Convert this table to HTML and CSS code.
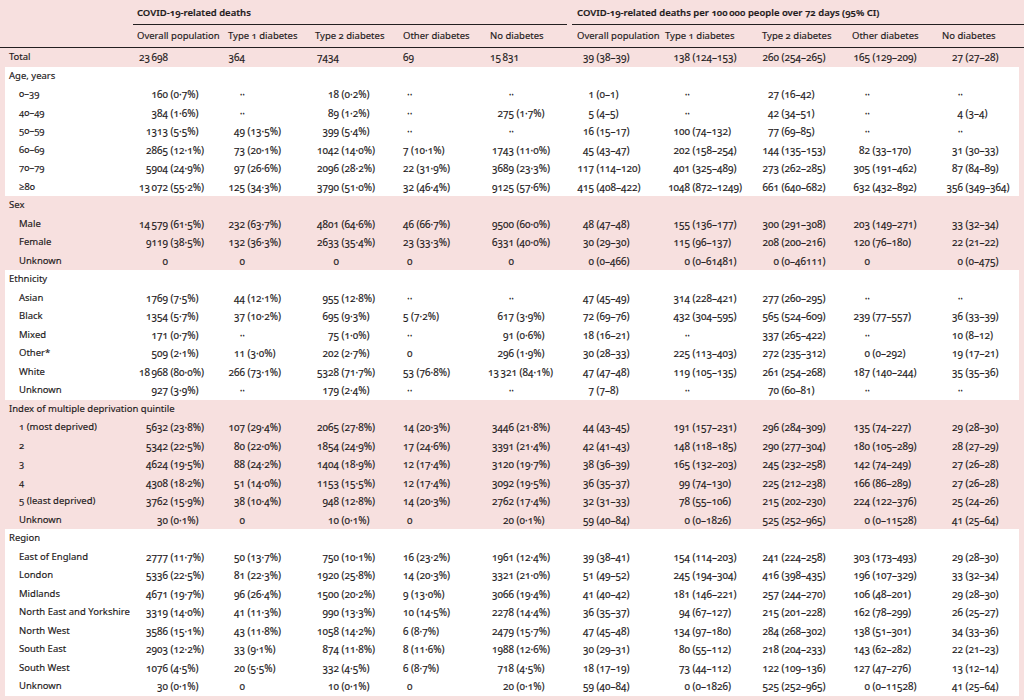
FILE: index.html
```html
<!DOCTYPE html>
<html lang="en">
<head>
<meta charset="utf-8">
<title>COVID-19-related deaths by diabetes status</title>
<link rel="stylesheet" href="styles.css">
</head>
<body>
<table class="tbl">
<colgroup>
<col class="c0"><col class="c1"><col class="c2"><col class="c3"><col class="c4"><col class="c5"><col class="c6"><col class="c7"><col class="c8"><col class="c9"><col class="c10">
</colgroup>
<thead>
<tr class="grp"><th></th><th colspan="5"><div class="gl gl1">COVID-19-related deaths</div></th><th colspan="5"><div class="gl gl2">COVID-19-related deaths per 100&#8201;000 people over 72 days (95% CI)</div></th></tr>
<tr class="sub"><th></th><th>Overall population</th><th>Type 1 diabetes</th><th>Type 2 diabetes</th><th>Other diabetes</th><th>No diabetes</th><th>Overall population</th><th>Type 1 diabetes</th><th>Type 2 diabetes</th><th>Other diabetes</th><th>No diabetes</th></tr>
</thead>
<tbody class="pink">
<tr class="tot"><th class="h">Total</th><td><span class="n">23&#8201;698</span></td><td><span class="n">364</span></td><td><span class="n">7434</span></td><td><span class="n">69</span></td><td><span class="n">15&#8201;831</span></td><td><span class="n">39</span> (38–39)</td><td><span class="n">138</span> (124–153)</td><td><span class="n">260</span> (254–265)</td><td><span class="n">165</span> (129–209)</td><td><span class="n">27</span> (27–28)</td></tr>
</tbody>
<tbody class="white">
<tr><th class="h" colspan="11">Age, years</th></tr>
<tr><th>0–39</th><td><span class="n">160</span> (0·7%)</td><td><span class="n">··</span></td><td><span class="n">18</span> (0·2%)</td><td><span class="z">··</span></td><td><span class="n">··</span></td><td><span class="n">1</span> (0–1)</td><td><span class="n">··</span></td><td><span class="n">27</span> (16–42)</td><td><span class="n">··</span></td><td><span class="n">··</span></td></tr>
<tr><th>40–49</th><td><span class="n">384</span> (1·6%)</td><td><span class="n">··</span></td><td><span class="n">89</span> (1·2%)</td><td><span class="z">··</span></td><td><span class="n">275</span> (1·7%)</td><td><span class="n">5</span> (4–5)</td><td><span class="n">··</span></td><td><span class="n">42</span> (34–51)</td><td><span class="n">··</span></td><td><span class="n">4</span> (3–4)</td></tr>
<tr><th>50–59</th><td><span class="n">1313</span> (5·5%)</td><td><span class="n">49</span> (13·5%)</td><td><span class="n">399</span> (5·4%)</td><td><span class="z">··</span></td><td><span class="n">··</span></td><td><span class="n">16</span> (15–17)</td><td><span class="n">100</span> (74–132)</td><td><span class="n">77</span> (69–85)</td><td><span class="n">··</span></td><td><span class="n">··</span></td></tr>
<tr><th>60–69</th><td><span class="n">2865</span> (12·1%)</td><td><span class="n">73</span> (20·1%)</td><td><span class="n">1042</span> (14·0%)</td><td><span class="n">7</span> (10·1%)</td><td><span class="n">1743</span> (11·0%)</td><td><span class="n">45</span> (43–47)</td><td><span class="n">202</span> (158–254)</td><td><span class="n">144</span> (135–153)</td><td><span class="n">82</span> (33–170)</td><td><span class="n">31</span> (30–33)</td></tr>
<tr><th>70–79</th><td><span class="n">5904</span> (24·9%)</td><td><span class="n">97</span> (26·6%)</td><td><span class="n">2096</span> (28·2%)</td><td><span class="n">22</span> (31·9%)</td><td><span class="n">3689</span> (23·3%)</td><td><span class="n">117</span> (114–120)</td><td><span class="n">401</span> (325–489)</td><td><span class="n">273</span> (262–285)</td><td><span class="n">305</span> (191–462)</td><td><span class="n">87</span> (84–89)</td></tr>
<tr><th>≥80</th><td><span class="n">13&#8201;072</span> (55·2%)</td><td><span class="n">125</span> (34·3%)</td><td><span class="n">3790</span> (51·0%)</td><td><span class="n">32</span> (46·4%)</td><td><span class="n">9125</span> (57·6%)</td><td><span class="n">415</span> (408–422)</td><td><span class="n">1048</span> (872–1249)</td><td><span class="n">661</span> (640–682)</td><td><span class="n">632</span> (432–892)</td><td><span class="n">356</span> (349–364)</td></tr>
</tbody>
<tbody class="pink">
<tr><th class="h" colspan="11">Sex</th></tr>
<tr><th>Male</th><td><span class="n">14&#8201;579</span> (61·5%)</td><td><span class="n">232</span> (63·7%)</td><td><span class="n">4801</span> (64·6%)</td><td><span class="n">46</span> (66·7%)</td><td><span class="n">9500</span> (60·0%)</td><td><span class="n">48</span> (47–48)</td><td><span class="n">155</span> (136–177)</td><td><span class="n">300</span> (291–308)</td><td><span class="n">203</span> (149–271)</td><td><span class="n">33</span> (32–34)</td></tr>
<tr><th>Female</th><td><span class="n">9119</span> (38·5%)</td><td><span class="n">132</span> (36·3%)</td><td><span class="n">2633</span> (35·4%)</td><td><span class="n">23</span> (33·3%)</td><td><span class="n">6331</span> (40·0%)</td><td><span class="n">30</span> (29–30)</td><td><span class="n">115</span> (96–137)</td><td><span class="n">208</span> (200–216)</td><td><span class="n">120</span> (76–180)</td><td><span class="n">22</span> (21–22)</td></tr>
<tr><th>Unknown</th><td><span class="n">0</span></td><td><span class="n">0</span></td><td><span class="n">0</span></td><td><span class="z">0</span></td><td><span class="n">0</span></td><td><span class="n">0</span> (0–466)</td><td><span class="n">0</span> (0–61481)</td><td><span class="n">0</span> (0–46111)</td><td><span class="n">0</span></td><td><span class="n">0</span> (0–475)</td></tr>
</tbody>
<tbody class="white">
<tr><th class="h" colspan="11">Ethnicity</th></tr>
<tr><th>Asian</th><td><span class="n">1769</span> (7·5%)</td><td><span class="n">44</span> (12·1%)</td><td><span class="n">955</span> (12·8%)</td><td><span class="z">··</span></td><td><span class="n">··</span></td><td><span class="n">47</span> (45–49)</td><td><span class="n">314</span> (228–421)</td><td><span class="n">277</span> (260–295)</td><td><span class="n">··</span></td><td><span class="n">··</span></td></tr>
<tr><th>Black</th><td><span class="n">1354</span> (5·7%)</td><td><span class="n">37</span> (10·2%)</td><td><span class="n">695</span> (9·3%)</td><td><span class="n">5</span> (7·2%)</td><td><span class="n">617</span> (3·9%)</td><td><span class="n">72</span> (69–76)</td><td><span class="n">432</span> (304–595)</td><td><span class="n">565</span> (524–609)</td><td><span class="n">239</span> (77–557)</td><td><span class="n">36</span> (33–39)</td></tr>
<tr><th>Mixed</th><td><span class="n">171</span> (0·7%)</td><td><span class="n">··</span></td><td><span class="n">75</span> (1·0%)</td><td><span class="z">··</span></td><td><span class="n">91</span> (0·6%)</td><td><span class="n">18</span> (16–21)</td><td><span class="n">··</span></td><td><span class="n">337</span> (265–422)</td><td><span class="n">··</span></td><td><span class="n">10</span> (8–12)</td></tr>
<tr><th>Other*</th><td><span class="n">509</span> (2·1%)</td><td><span class="n">11</span> (3·0%)</td><td><span class="n">202</span> (2·7%)</td><td><span class="z">0</span></td><td><span class="n">296</span> (1·9%)</td><td><span class="n">30</span> (28–33)</td><td><span class="n">225</span> (113–403)</td><td><span class="n">272</span> (235–312)</td><td><span class="n">0</span> (0–292)</td><td><span class="n">19</span> (17–21)</td></tr>
<tr><th>White</th><td><span class="n">18&#8201;968</span> (80·0%)</td><td><span class="n">266</span> (73·1%)</td><td><span class="n">5328</span> (71·7%)</td><td><span class="n">53</span> (76·8%)</td><td><span class="n wide">13&#8201;321</span> (84·1%)</td><td><span class="n">47</span> (47–48)</td><td><span class="n">119</span> (105–135)</td><td><span class="n">261</span> (254–268)</td><td><span class="n">187</span> (140–244)</td><td><span class="n">35</span> (35–36)</td></tr>
<tr><th>Unknown</th><td><span class="n">927</span> (3·9%)</td><td><span class="n">··</span></td><td><span class="n">179</span> (2·4%)</td><td><span class="z">··</span></td><td><span class="n">··</span></td><td><span class="n">7</span> (7–8)</td><td><span class="n">··</span></td><td><span class="n">70</span> (60–81)</td><td><span class="n">··</span></td><td><span class="n">··</span></td></tr>
</tbody>
<tbody class="pink">
<tr><th class="h" colspan="11">Index of multiple deprivation quintile</th></tr>
<tr><th>1 (most deprived)</th><td><span class="n">5632</span> (23·8%)</td><td><span class="n">107</span> (29·4%)</td><td><span class="n">2065</span> (27·8%)</td><td><span class="n">14</span> (20·3%)</td><td><span class="n">3446</span> (21·8%)</td><td><span class="n">44</span> (43–45)</td><td><span class="n">191</span> (157–231)</td><td><span class="n">296</span> (284–309)</td><td><span class="n">135</span> (74–227)</td><td><span class="n">29</span> (28–30)</td></tr>
<tr><th>2</th><td><span class="n">5342</span> (22·5%)</td><td><span class="n">80</span> (22·0%)</td><td><span class="n">1854</span> (24·9%)</td><td><span class="n">17</span> (24·6%)</td><td><span class="n">3391</span> (21·4%)</td><td><span class="n">42</span> (41–43)</td><td><span class="n">148</span> (118–185)</td><td><span class="n">290</span> (277–304)</td><td><span class="n">180</span> (105–289)</td><td><span class="n">28</span> (27–29)</td></tr>
<tr><th>3</th><td><span class="n">4624</span> (19·5%)</td><td><span class="n">88</span> (24·2%)</td><td><span class="n">1404</span> (18·9%)</td><td><span class="n">12</span> (17·4%)</td><td><span class="n">3120</span> (19·7%)</td><td><span class="n">38</span> (36–39)</td><td><span class="n">165</span> (132–203)</td><td><span class="n">245</span> (232–258)</td><td><span class="n">142</span> (74–249)</td><td><span class="n">27</span> (26–28)</td></tr>
<tr><th>4</th><td><span class="n">4308</span> (18·2%)</td><td><span class="n">51</span> (14·0%)</td><td><span class="n">1153</span> (15·5%)</td><td><span class="n">12</span> (17·4%)</td><td><span class="n">3092</span> (19·5%)</td><td><span class="n">36</span> (35–37)</td><td><span class="n">99</span> (74–130)</td><td><span class="n">225</span> (212–238)</td><td><span class="n">166</span> (86–289)</td><td><span class="n">27</span> (26–28)</td></tr>
<tr><th>5 (least deprived)</th><td><span class="n">3762</span> (15·9%)</td><td><span class="n">38</span> (10·4%)</td><td><span class="n">948</span> (12·8%)</td><td><span class="n">14</span> (20·3%)</td><td><span class="n">2762</span> (17·4%)</td><td><span class="n">32</span> (31–33)</td><td><span class="n">78</span> (55–106)</td><td><span class="n">215</span> (202–230)</td><td><span class="n">224</span> (122–376)</td><td><span class="n">25</span> (24–26)</td></tr>
<tr><th>Unknown</th><td><span class="n">30</span> (0·1%)</td><td><span class="n">0</span></td><td><span class="n">10</span> (0·1%)</td><td><span class="z">0</span></td><td><span class="n">20</span> (0·1%)</td><td><span class="n">59</span> (40–84)</td><td><span class="n">0</span> (0–1826)</td><td><span class="n">525</span> (252–965)</td><td><span class="n">0</span> (0–11528)</td><td><span class="n">41</span> (25–64)</td></tr>
</tbody>
<tbody class="white">
<tr><th class="h" colspan="11">Region</th></tr>
<tr><th>East of England</th><td><span class="n">2777</span> (11·7%)</td><td><span class="n">50</span> (13·7%)</td><td><span class="n">750</span> (10·1%)</td><td><span class="n">16</span> (23·2%)</td><td><span class="n">1961</span> (12·4%)</td><td><span class="n">39</span> (38–41)</td><td><span class="n">154</span> (114–203)</td><td><span class="n">241</span> (224–258)</td><td><span class="n">303</span> (173–493)</td><td><span class="n">29</span> (28–30)</td></tr>
<tr><th>London</th><td><span class="n">5336</span> (22·5%)</td><td><span class="n">81</span> (22·3%)</td><td><span class="n">1920</span> (25·8%)</td><td><span class="n">14</span> (20·3%)</td><td><span class="n">3321</span> (21·0%)</td><td><span class="n">51</span> (49–52)</td><td><span class="n">245</span> (194–304)</td><td><span class="n">416</span> (398–435)</td><td><span class="n">196</span> (107–329)</td><td><span class="n">33</span> (32–34)</td></tr>
<tr><th>Midlands</th><td><span class="n">4671</span> (19·7%)</td><td><span class="n">96</span> (26·4%)</td><td><span class="n">1500</span> (20·2%)</td><td><span class="n">9</span> (13·0%)</td><td><span class="n">3066</span> (19·4%)</td><td><span class="n">41</span> (40–42)</td><td><span class="n">181</span> (146–221)</td><td><span class="n">257</span> (244–270)</td><td><span class="n">106</span> (48–201)</td><td><span class="n">29</span> (28–30)</td></tr>
<tr><th>North East and Yorkshire</th><td><span class="n">3319</span> (14·0%)</td><td><span class="n">41</span> (11·3%)</td><td><span class="n">990</span> (13·3%)</td><td><span class="n">10</span> (14·5%)</td><td><span class="n">2278</span> (14·4%)</td><td><span class="n">36</span> (35–37)</td><td><span class="n">94</span> (67–127)</td><td><span class="n">215</span> (201–228)</td><td><span class="n">162</span> (78–299)</td><td><span class="n">26</span> (25–27)</td></tr>
<tr><th>North West</th><td><span class="n">3586</span> (15·1%)</td><td><span class="n">43</span> (11·8%)</td><td><span class="n">1058</span> (14·2%)</td><td><span class="n">6</span> (8·7%)</td><td><span class="n">2479</span> (15·7%)</td><td><span class="n">47</span> (45–48)</td><td><span class="n">134</span> (97–180)</td><td><span class="n">284</span> (268–302)</td><td><span class="n">138</span> (51–301)</td><td><span class="n">34</span> (33–36)</td></tr>
<tr><th>South East</th><td><span class="n">2903</span> (12·2%)</td><td><span class="n">33</span> (9·1%)</td><td><span class="n">874</span> (11·8%)</td><td><span class="n">8</span> (11·6%)</td><td><span class="n">1988</span> (12·6%)</td><td><span class="n">30</span> (29–31)</td><td><span class="n">80</span> (55–112)</td><td><span class="n">218</span> (204–233)</td><td><span class="n">143</span> (62–282)</td><td><span class="n">22</span> (21–23)</td></tr>
<tr><th>South West</th><td><span class="n">1076</span> (4·5%)</td><td><span class="n">20</span> (5·5%)</td><td><span class="n">332</span> (4·5%)</td><td><span class="n">6</span> (8·7%)</td><td><span class="n">718</span> (4·5%)</td><td><span class="n">18</span> (17–19)</td><td><span class="n">73</span> (44–112)</td><td><span class="n">122</span> (109–136)</td><td><span class="n">127</span> (47–276)</td><td><span class="n">13</span> (12–14)</td></tr>
<tr><th>Unknown</th><td><span class="n">30</span> (0·1%)</td><td><span class="n">0</span></td><td><span class="n">10</span> (0·1%)</td><td><span class="z">0</span></td><td><span class="n">20</span> (0·1%)</td><td><span class="n">59</span> (40–84)</td><td><span class="n">0</span> (0–1826)</td><td><span class="n">525</span> (252–965)</td><td><span class="n">0</span> (0–11528)</td><td><span class="n">41</span> (25–64)</td></tr>
</tbody>
</table>
</body>
</html>
```

FILE: styles.css
```css
html, body {
  margin: 0;
  padding: 0;
  background: #f7e0df;
}

body {
  font-family: "Noto Sans", "Open Sans", sans-serif;
  font-size: 9.5px;
  color: #1e1a1b;
  font-variant-numeric: oldstyle-nums;
  -webkit-text-stroke: 0.15px #1e1a1b;
}

.tbl {
  width: 1024px;
  table-layout: fixed;
  border-collapse: collapse;
  border-spacing: 0;
}

.c0 { width: 133px; }
.c1 { width: 91px; }
.c2 { width: 87px; }
.c3 { width: 88px; }
.c4 { width: 87px; }
.c5 { width: 87px; }
.c6 { width: 88px; }
.c7 { width: 97px; }
.c8 { width: 90px; }
.c9 { width: 90px; }
.c10 { width: 86px; }

th, td {
  padding: 0 0 0 4px;
  text-align: left;
  font-weight: normal;
  white-space: nowrap;
  vertical-align: middle;
  line-height: 12px;
}

tbody td {
  font-size: 10px;
}

/* header */
.grp th {
  padding: 6px 0 0 0;
  vertical-align: bottom;
}

.gl {
  padding: 0 0 5px 4px;
  line-height: 13px;
  font-weight: 600;
  border-bottom: 1px solid #231f20;
}

.gl1 { margin-right: 6px; }
.gl2 { margin-left: -1px; padding-left: 5px; }

.sub th {
  padding-top: 4px;
  padding-bottom: 5px;
  line-height: 13px;
  border-bottom: 1px solid #231f20;
}

/* body */
tbody tr { height: 18.5px; }
tbody .tot { height: 19px; }

tbody th { padding-left: 19px; }
tbody th.h { padding-left: 9px; }

.white td, .white th {
  background: #fff;
}

.white tr > :first-child {
  box-shadow: inset 5px 0 0 #f7e0df;
}

.white tr > :last-child {
  box-shadow: inset -5px 0 0 #f7e0df;
}

.white tr > th.h[colspan] {
  box-shadow: inset 5px 0 0 #f7e0df, inset -5px 0 0 #f7e0df;
}

.n {
  display: inline-block;
  text-align: right;
}

.z { padding-left: 4px; }

td:nth-child(2) .n { width: 31px; }
td:nth-child(3) .n { width: 17px; }
td:nth-child(4) .n { width: 24px; }
td:nth-child(6) .n { width: 24px; }
td:nth-child(7) .n { width: 17px; }
td:nth-child(8) .n { width: 25px; }
td:nth-child(9) .n { width: 17px; }
td:nth-child(10) .n { width: 18px; }
td:nth-child(11) .n { width: 21px; }

td .n.wide {
  width: auto;
  margin-left: -2px;
}
```
